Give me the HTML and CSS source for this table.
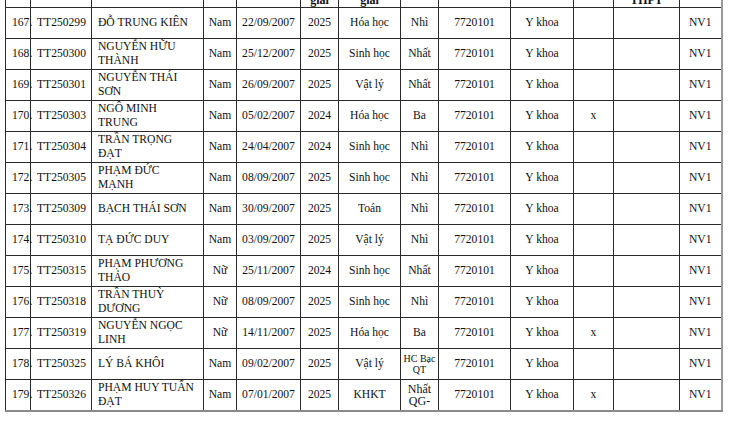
FILE: index.html
```html
<!DOCTYPE html>
<html lang="vi">
<head>
<meta charset="utf-8">
<title>Danh sách</title>
<link rel="stylesheet" href="styles.css">
</head>
<body>
<table class="list">
  <colgroup>
    <col class="c-stt"><col class="c-ma"><col class="c-ten"><col class="c-gt"><col class="c-ns">
    <col class="c-nam"><col class="c-mon"><col class="c-giai"><col class="c-mn"><col class="c-nganh">
    <col class="c-x"><col class="c-thpt"><col class="c-nv">
  </colgroup>
  <thead>
    <tr class="head">
      <th>STT</th><th>Mã hồ sơ</th><th>Họ và tên</th><th>Giới tính</th><th>Ngày sinh</th>
      <th class="b">Năm đạt<br>giải</th><th class="b">Môn đạt<br>giải</th><th>Loại giải</th><th>Mã ngành</th><th>Tên ngành</th>
      <th>Chuyên</th><th class="b">Trường<br>THPT</th><th>NV</th>
    </tr>
  </thead>
  <tbody>
    <tr><td class="stt">167.</td><td class="l">TT250299</td><td class="l">ĐỖ TRUNG KIÊN</td><td>Nam</td><td>22/09/2007</td><td>2025</td><td>Hóa học</td><td>Nhì</td><td>7720101</td><td>Y khoa</td><td></td><td></td><td>NV1</td></tr>
    <tr><td class="stt">168.</td><td class="l">TT250300</td><td class="l">NGUYỄN HỮU<br>THÀNH</td><td>Nam</td><td>25/12/2007</td><td>2025</td><td>Sinh học</td><td>Nhất</td><td>7720101</td><td>Y khoa</td><td></td><td></td><td>NV1</td></tr>
    <tr><td class="stt">169.</td><td class="l">TT250301</td><td class="l">NGUYỄN THÁI<br>SƠN</td><td>Nam</td><td>26/09/2007</td><td>2025</td><td>Vật lý</td><td>Nhất</td><td>7720101</td><td>Y khoa</td><td></td><td></td><td>NV1</td></tr>
    <tr><td class="stt">170.</td><td class="l">TT250303</td><td class="l">NGÔ MINH<br>TRUNG</td><td>Nam</td><td>05/02/2007</td><td>2024</td><td>Hóa học</td><td>Ba</td><td>7720101</td><td>Y khoa</td><td>x</td><td></td><td>NV1</td></tr>
    <tr><td class="stt">171.</td><td class="l">TT250304</td><td class="l">TRẦN TRỌNG<br>ĐẠT</td><td>Nam</td><td>24/04/2007</td><td>2024</td><td>Sinh học</td><td>Nhì</td><td>7720101</td><td>Y khoa</td><td></td><td></td><td>NV1</td></tr>
    <tr><td class="stt">172.</td><td class="l">TT250305</td><td class="l">PHẠM ĐỨC<br>MẠNH</td><td>Nam</td><td>08/09/2007</td><td>2025</td><td>Sinh học</td><td>Nhì</td><td>7720101</td><td>Y khoa</td><td></td><td></td><td>NV1</td></tr>
    <tr><td class="stt">173.</td><td class="l">TT250309</td><td class="l">BẠCH THÁI SƠN</td><td>Nam</td><td>30/09/2007</td><td>2025</td><td>Toán</td><td>Nhì</td><td>7720101</td><td>Y khoa</td><td></td><td></td><td>NV1</td></tr>
    <tr><td class="stt">174.</td><td class="l">TT250310</td><td class="l">TẠ ĐỨC DUY</td><td>Nam</td><td>03/09/2007</td><td>2025</td><td>Vật lý</td><td>Nhì</td><td>7720101</td><td>Y khoa</td><td></td><td></td><td>NV1</td></tr>
    <tr><td class="stt">175.</td><td class="l">TT250315</td><td class="l">PHẠM PHƯƠNG<br>THẢO</td><td>Nữ</td><td>25/11/2007</td><td>2024</td><td>Sinh học</td><td>Nhất</td><td>7720101</td><td>Y khoa</td><td></td><td></td><td>NV1</td></tr>
    <tr><td class="stt">176.</td><td class="l">TT250318</td><td class="l">TRẦN THUỲ<br>DƯƠNG</td><td>Nữ</td><td>08/09/2007</td><td>2025</td><td>Sinh học</td><td>Nhì</td><td>7720101</td><td>Y khoa</td><td></td><td></td><td>NV1</td></tr>
    <tr><td class="stt">177.</td><td class="l">TT250319</td><td class="l">NGUYỄN NGỌC<br>LINH</td><td>Nữ</td><td>14/11/2007</td><td>2025</td><td>Hóa học</td><td>Ba</td><td>7720101</td><td>Y khoa</td><td>x</td><td></td><td>NV1</td></tr>
    <tr><td class="stt">178.</td><td class="l">TT250325</td><td class="l">LÝ BÁ KHÔI</td><td>Nam</td><td>09/02/2007</td><td>2025</td><td>Vật lý</td><td class="small">HC Bạc<br>QT</td><td>7720101</td><td>Y khoa</td><td></td><td></td><td>NV1</td></tr>
    <tr><td class="stt">179.</td><td class="l">TT250326</td><td class="l">PHẠM HUY TUẤN<br>ĐẠT</td><td>Nam</td><td>07/01/2007</td><td>2025</td><td>KHKT</td><td class="top">Nhất<br>QG-</td><td>7720101</td><td>Y khoa</td><td>x</td><td></td><td>NV1</td></tr>
  </tbody>
</table>
</body>
</html>
```

FILE: styles.css
```css
html, body {
  margin: 0;
  padding: 0;
  background: #ffffff;
  overflow: hidden;
}

body {
  font-family: "Liberation Serif", "Times New Roman", serif;
  font-size: 11.6px;
  color: #111;
}

.list {
  border-collapse: collapse;
  table-layout: fixed;
  width: 716px;
  margin: -64px 0 0 5px;
}

.c-stt { width: 25px; }
.c-ma { width: 61px; }
.c-ten { width: 112px; }
.c-gt { width: 33px; }
.c-ns { width: 64px; }
.c-nam { width: 38px; }
.c-mon { width: 62px; }
.c-giai { width: 38px; }
.c-mn { width: 72px; }
.c-nganh { width: 63px; }
.c-x { width: 40px; }
.c-thpt { width: 66px; }
.c-nv { width: 42px; }

.list th,
.list td {
  border: 1px solid #2a2a2a;
  padding: 0 2px;
  text-align: center;
  vertical-align: middle;
  white-space: nowrap;
  line-height: 14px;
}

.head { height: 71px; }
.head th {
  vertical-align: top;
  padding-top: 6px;
  font-weight: bold;
  font-size: 12px;
  line-height: 13px;
  overflow: hidden;
}

.head th.b {
  vertical-align: bottom;
  padding-top: 0;
  padding-bottom: 0;
}

.list tbody tr { height: 31px; }

.list td.stt {
  text-align: left;
  padding-left: 6px;
  padding-right: 0;
}

.list td.l {
  text-align: left;
  padding-left: 6px;
}

.list td.small {
  font-size: 10px;
  line-height: 11px;
}

.list td.top {
  vertical-align: top;
  padding-top: 3px;
  font-size: 12px;
  line-height: 12px;
}

.list tbody tr:last-child td {
  border-bottom: 2px solid #8a8a8a;
}

.list tr td:last-child,
.list tr th:last-child {
  border-right: 2px solid #9a9a9a;
}
```
